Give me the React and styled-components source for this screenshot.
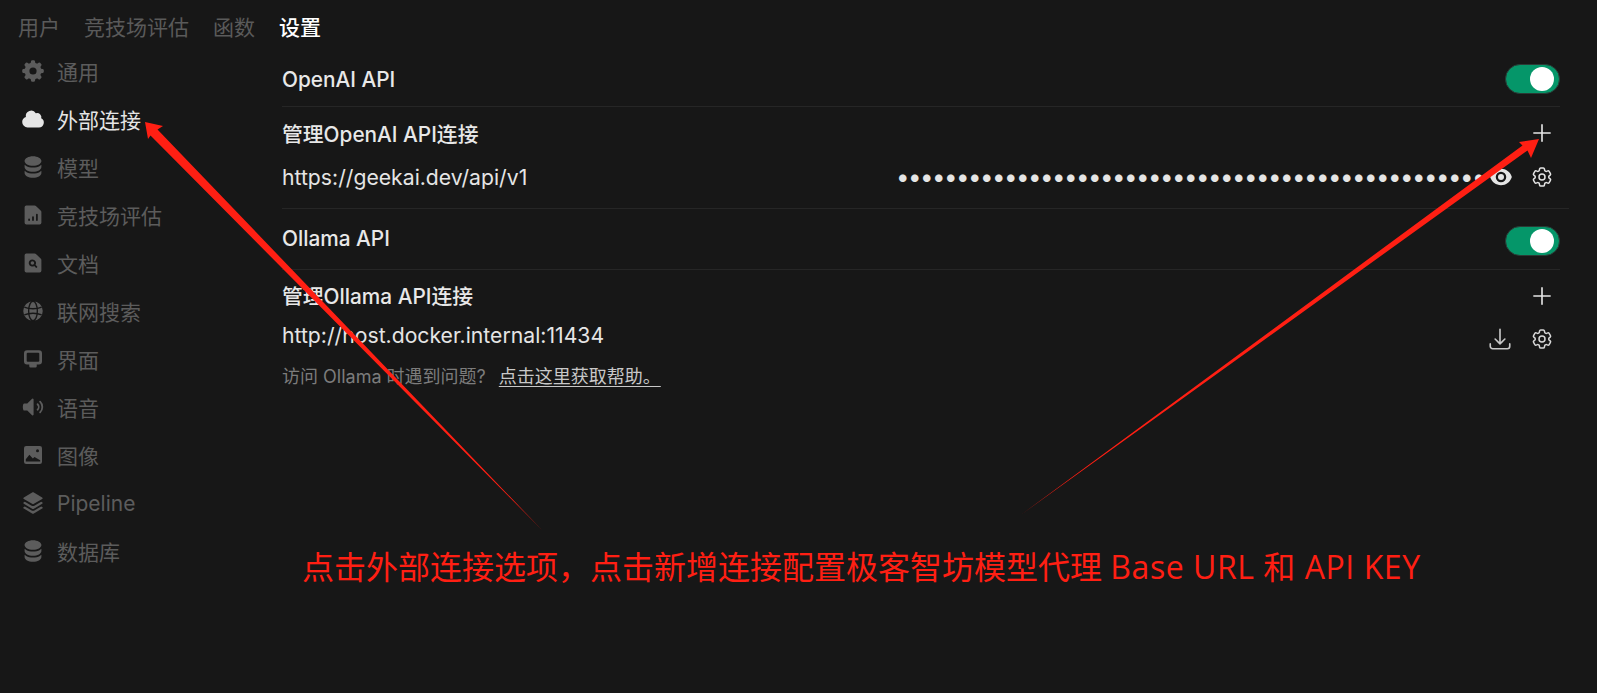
import React from 'react';
import styled, { createGlobalStyle } from 'styled-components';
import {
  HiMiniCog8Tooth, HiMiniCloud, HiMiniCircleStack, HiMiniDocumentChartBar,
  HiMiniDocumentMagnifyingGlass, HiMiniSpeakerWave, HiMiniSquare3Stack3D, HiEye,
  HiOutlineCog6Tooth, HiOutlinePlus, HiOutlineArrowDownTray,
} from 'react-icons/hi2';

const Global = createGlobalStyle`
  html, body { margin: 0; background: #171717; height: 100%; overflow: hidden; }
  body { font-family: Inter, "Noto Sans CJK SC", sans-serif; }
`;

const Page = styled.div`
  position: relative;
  width: 1597px;
  height: 693px;
  background: #171717;
  color: #e5e5e5;
  overflow: hidden;
`;

const TopTabs = styled.nav`
  display: flex;
  gap: 24px;
  padding: 14px 0 0 18px;
  height: 33px;
`;

const TopTab = styled.span`
  font-size: 21px;
  line-height: 28px;
  color: ${p => (p.$active ? '#ffffff' : '#5a5a5a')};
  font-weight: ${p => (p.$active ? 500 : 400)};
`;

const Body = styled.div`
  display: flex;
`;

const Sidebar = styled.aside`
  width: 282px;
  flex: none;
  display: flex;
  flex-direction: column;
`;

const SideItem = styled.div`
  display: flex;
  align-items: center;
  gap: 12px;
  height: 48px;
  padding-left: 21px;
  font-size: 21px;
  color: ${p => (p.$active ? '#e5e5e5' : '#5c5c5c')};
  svg { width: 24px; height: 24px; flex: none; }
`;

const Content = styled.main`
  width: 1287px;
  flex: none;
  display: flex;
  flex-direction: column;
  padding-top: 5px;
`;

const Section = styled.section`
  width: ${p => (p.$wide ? '1287px' : '1278px')};
  border-bottom: ${p => (p.$line ? '1px solid #262626' : 'none')};
  padding: ${p => p.$pad || '0'};
`;

const Row = styled.div`
  display: flex;
  align-items: center;
  justify-content: space-between;
  height: ${p => p.$h || 'auto'};
`;

const Heading = styled.span`
  font-size: 20.8px;
  font-weight: 500;
  color: #e8e8e8;
  margin-bottom: ${p => p.$lift || '0'};
`;

const Url = styled.span`
  font-size: 21.2px;
  color: #e5e5e5;
`;

const Actions = styled.div`
  display: flex;
  align-items: center;
  gap: 17px;
  padding-right: ${p => p.$pr || '6px'};
  margin-top: ${p => p.$drop || '0'};
`;

const IconSlot = styled.span`
  display: inline-flex;
  color: ${p => p.$color || '#e5e5e5'};
  svg { width: ${p => p.$size || '24px'}; height: ${p => p.$size || '24px'}; display: block; }
`;

const Secret = styled.span`
  font-size: 24px;
  letter-spacing: -1.5px;
  color: #e5e5e5;
  white-space: nowrap;
  line-height: 1;
`;

const SecretWrap = styled.div`
  display: flex;
  align-items: center;
  gap: 5px;
`;

const Switch = styled.div`
  width: 55px;
  height: 30px;
  box-sizing: border-box;
  border-radius: 15px;
  background: #059669;
  border: 1px solid #2b3a35;
  display: flex;
  align-items: center;
  justify-content: flex-end;
  padding-right: 5px;
`;

const Knob = styled.span`
  width: 24px;
  height: 24px;
  border-radius: 50%;
  background: #fff;
`;

const Help = styled.div`
  display: flex;
  gap: 13px;
  font-size: 18px;
  color: #7c7c7c;
  margin-top: 12px;
`;

const HelpLink = styled.span`
  color: #c8c8c8;
  text-decoration: underline;
  text-underline-offset: 3px;
`;

const Annotations = styled.svg`
  position: absolute;
  inset: 0;
  width: 1597px;
  height: 693px;
  pointer-events: none;
`;

const Caption = styled.div`
  position: absolute;
  left: 302px;
  top: 545px;
  font-family: "Open Sans", "Noto Sans CJK SC", sans-serif;
  font-size: 32px;
  line-height: 44px;
  color: #ff1f13;
  white-space: nowrap;
`;

const CaptionLatin = styled.span`
  letter-spacing: 0.55px;
`;

const GlobeIcon = () => (
  <svg viewBox="0 0 16 16">
    <circle cx="8" cy="8" r="6.5" fill="currentColor" />
    <g fill="none" stroke="#171717" strokeWidth="0.9">
      <ellipse cx="8" cy="8" rx="2.9" ry="6.5" />
      <path d="M2.2 5.4C5.5 6.9 10.5 6.9 13.8 5.4M2.2 10.6C5.5 9.1 10.5 9.1 13.8 10.6" />
    </g>
  </svg>
);

const MonitorIcon = () => (
  <svg viewBox="0 0 16 16">
    <path
      fill="currentColor"
      fillRule="evenodd"
      d="M4 2.2h8a2 2 0 0 1 2 2v5.4a2 2 0 0 1-2 2h-1.5v1.2a.9.9 0 0 1-.9.9H6.400a.9.9 0 0 1-.9-.9v-1.200H4a2 2 0 0 1-2-2V4.200a2 2 0 0 1 2-2ZM4.500 3.800a.7.7 0 0 0-.7.7v4.600a.7.7 0 0 0 .7.7h7a.7.7 0 0 0 .7-.7V4.500a.7.7 0 0 0-.7-.7Z"
    />
  </svg>
);

const PhotoIcon = () => (
  <svg viewBox="0 0 16 16">
    <rect x="2" y="2" width="12" height="12" rx="1.5" fill="currentColor" />
    <circle cx="11" cy="5.200" r="1" fill="#171717" />
    <path fill="#171717" d="M3.200 12.300V10.800L5.600 7.800 7.900 10.300 9 9.400 12.800 11.500V12.300Z" />
  </svg>
);

const items = [
  ['通用', HiMiniCog8Tooth],
  ['外部连接', HiMiniCloud, true],
  ['模型', HiMiniCircleStack],
  ['竞技场评估', HiMiniDocumentChartBar],
  ['文档', HiMiniDocumentMagnifyingGlass],
  ['联网搜索', GlobeIcon],
  ['界面', MonitorIcon],
  ['语音', HiMiniSpeakerWave],
  ['图像', PhotoIcon],
  ['Pipeline', HiMiniSquare3Stack3D],
  ['数据库', HiMiniCircleStack],
];

export default function App() {
  return (
    <Page>
      <Global />
      <TopTabs>
        <TopTab>用户</TopTab>
        <TopTab>竞技场评估</TopTab>
        <TopTab>函数</TopTab>
        <TopTab $active>设置</TopTab>
      </TopTabs>
      <Body>
        <Sidebar>
          {items.map(([label, Icon, active]) => (
            <SideItem key={label} $active={active}>
              <Icon />
              {label}
            </SideItem>
          ))}
        </Sidebar>
        <Content>
          <Section $line>
            <Row $h="54px">
              <Heading>OpenAI API</Heading>
              <Switch><Knob /></Switch>
            </Row>
          </Section>
          <Section $wide $line $pad="0 0 12px">
            <Row $h="51px">
              <Heading>管理OpenAI API连接</Heading>
              <Actions $pr="14px"><IconSlot $size="26px"><HiOutlinePlus /></IconSlot></Actions>
            </Row>
            <Row $h="38px">
              <Url>https://geekai.dev/api/v1</Url>
              <Actions $pr="15px">
                <SecretWrap>
                  <Secret>{'•'.repeat(49)}</Secret>
                  <IconSlot><HiEye /></IconSlot>
                </SecretWrap>
                <IconSlot><HiOutlineCog6Tooth /></IconSlot>
              </Actions>
            </Row>
          </Section>
          <Section $line $pad="5px 0 1px">
            <Row $h="54px">
              <Heading $lift="6px">Ollama API</Heading>
              <Switch><Knob /></Switch>
            </Row>
          </Section>
          <Section>
            <Row $h="50px">
              <Heading>管理Ollama API连接</Heading>
              <Actions $pr="5px" $drop="2px"><IconSlot $size="26px"><HiOutlinePlus /></IconSlot></Actions>
            </Row>
            <Row $h="30px">
              <Url>http://host.docker.internal:11434</Url>
              <Actions $drop="8px">
                <IconSlot $color="#c8c8c8" $size="26px"><HiOutlineArrowDownTray /></IconSlot>
                <IconSlot $color="#d8d8d8"><HiOutlineCog6Tooth /></IconSlot>
              </Actions>
            </Row>
            <Help>
              <span>访问 Ollama 时遇到问题?</span>
              <HelpLink>点击这里获取帮助。</HelpLink>
            </Help>
          </Section>
        </Content>
      </Body>
      <Annotations viewBox="0 0 1597 693">
        <polygon fill="#ff1f13" points="145,122 163,126 157.500,129.500 542,530 150.500,135.500 148,139" />
        <polygon fill="#ff1f13" points="1539,139 1531,158 1527.500,150.500 1022,514 1522.500,145.500 1519,142" />
      </Annotations>
      <Caption>{'点击外部连接选项\uFF0C点击新增连接配置极客智坊模型代理 '}<CaptionLatin>Base URL 和 API KEY</CaptionLatin></Caption>
    </Page>
  );
}
